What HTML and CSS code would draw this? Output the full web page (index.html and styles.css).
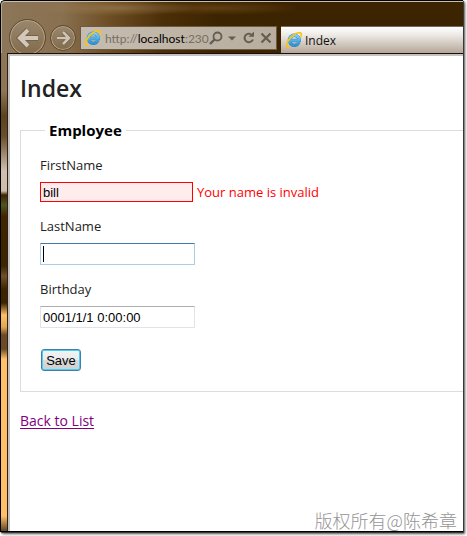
FILE: index.html
```html
<!DOCTYPE html>
<html lang="en">
<head>
<meta charset="utf-8">
<title>Index</title>
<link rel="stylesheet" href="styles.css">
</head>
<body>
<svg class="defs" aria-hidden="true">
  <defs>
    <linearGradient id="blue" x1="0" y1="0" x2="0" y2="1">
      <stop offset="0" stop-color="#7fd0f4"/>
      <stop offset="1" stop-color="#2f93d2"/>
    </linearGradient>
    <symbol id="ie" viewBox="0 0 16 16">
      <path d="M12.9 10.3A5 5 0 1 1 13.3 8.500H4" fill="none" stroke="#2f86c4" stroke-width="3.400"/>
      <path d="M12.9 10.3A5 5 0 1 1 13.3 8.500H4" fill="none" stroke="url(#blue)" stroke-width="2.600"/>
      <path d="M3.2 14.9C.2 15.8-.1 13 2 9.3 4.500 4.700 10.500.2 14 .8c1.700.3 1.700 2 .8 4" fill="none" stroke="#f9c414" stroke-width="1.700"/>
    </symbol>
  </defs>
</svg>
<div class="window">
  <header class="chrome">
    <nav class="nav">
      <button class="round back" aria-label="Back">
        <svg width="24" height="20" viewBox="0 0 24 20"><path d="M22 10H5M12 2L4 10l8 8" fill="none" stroke="#73614a" stroke-width="6"/><path d="M22 10H5M12 2L4 10l8 8" fill="none" stroke="#d2c7b8" stroke-width="4"/></svg>
      </button>
      <button class="round forward" aria-label="Forward">
        <svg width="15" height="14" viewBox="0 0 15 14"><path d="M1 7h11M7 1l6 6-6 6" fill="none" stroke="#6b5840" stroke-width="4"/><path d="M1 7h11M7 1l6 6-6 6" fill="none" stroke="#cfc3b3" stroke-width="2.600"/></svg>
      </button>
    </nav>
    <div class="address">
      <svg class="ie" width="16" height="16"><use href="#ie"/></svg>
      <span class="url"><span class="dim">http://</span>localhost<span class="dim">:230</span></span>
      <button class="tool" aria-label="Search"><svg width="14" height="14" viewBox="0 0 14 14"><circle cx="8.500" cy="5.500" r="4" fill="none" stroke="#665d52" stroke-width="1.800"/><path d="M5.500 8.500L1 13" stroke="#665d52" stroke-width="2.400"/></svg></button>
      <button class="tool" aria-label="Show addresses"><svg width="8" height="14" viewBox="0 0 8 14"><path d="M0 5.500h8L4 9.500z" fill="#665d52"/></svg></button>
      <button class="tool last" aria-label="Refresh"><svg width="12" height="14" viewBox="0 0 12 14"><path d="M8 3.200A4.300 4.300 0 1 0 9.900 8.500" fill="none" stroke="#665d52" stroke-width="2"/><path d="M5.500 5.800H11V.5z" fill="#665d52"/></svg></button>
      <button class="tool" aria-label="Stop"><svg width="12" height="14" viewBox="0 0 12 14"><path d="M1.500 2.500l9 9M10.500 2.500l-9 9" stroke="#665d52" stroke-width="2.200"/></svg></button>
    </div>
    <div class="tab">
      <svg class="ie" width="16" height="16"><use href="#ie"/></svg>
      <span>Index</span>
    </div>
  </header>
  <div class="frame">
    <main class="page">
      <h1>Index</h1>
      <form>
        <fieldset>
          <legend>Employee</legend>
          <label for="first">FirstName</label>
          <div class="field">
            <input class="invalid" id="first" type="text" value="bill" aria-describedby="first-error">
            <span class="error" id="first-error">Your name is invalid</span>
          </div>
          <label for="last">LastName</label>
          <div class="field focused"><input id="last" type="text"></div>
          <label for="birthday">Birthday</label>
          <div class="field"><input id="birthday" type="text" value="0001/1/1 0:00:00"></div>
          <button class="save" type="button">Save</button>
        </fieldset>
      </form>
      <p><a href="#">Back to List</a></p>
      <footer>版权所有@陈希章</footer>
    </main>
  </div>
</div>
</body>
</html>
```
FILE: styles.css
```css
* {
  box-sizing: border-box;
}

body {
  margin: 0;
  padding: 0 4px 4px 0;
  background: #fff;
  font-family: "Open Sans", sans-serif;
}

button {
  font: inherit;
  border: 0;
  padding: 0;
  background: none;
}

svg {
  display: block;
  flex: none;
}

.defs {
  position: absolute;
  width: 0;
  height: 0;
}

.window {
  display: flex;
  flex-direction: column;
  min-height: calc(100vh - 4px);
  border: 1px solid #000;
  border-right-width: 0;
  border-radius: 5px 0 0 0;
  overflow: hidden;
  background: linear-gradient(#8d7556 0, #8d7556 90px, #5d421e 115px, #6a4d2a 135px, #d0bfae 170px, #cdbca9 190px, #3d2400 194px, #4f5523 204px, #3f2600 215px, #3d2400 265px, #70502a 275px, #3d2400 288px, #3d2400 302px, #ffbf66 314px, #e2a650 326px, #6a4a28 334px, #6a4a28 348px, #ffc069 358px, #ffc069 515px, #5d4121 530px);
  box-shadow: 1px 1px 1px #333, 2px 2px 3px #555;
}

.chrome {
  display: flex;
  align-items: flex-end;
  height: 52px;
  border-top: 1px solid #c9bdab;
  border-left: 1px solid #b6a791;
  border-radius: 4px 0 0 0;
  overflow: hidden;
  background:
    radial-gradient(ellipse 80px 8px at 115px 6px, #a3835599, #a3835500),
    radial-gradient(ellipse 85px 7px at 215px 6px, #75501f99, #75501f00),
    linear-gradient(90deg, #8c7659 0, #89704f 60px, #6c4c23 110px, #4c2f08 160px, #3d2400 215px);
}

.nav {
  display: flex;
  align-items: center;
  gap: 4px;
  height: 37px;
  margin: 0 4px -3px 7px;
}

.round {
  display: flex;
  flex: none;
  align-items: center;
  justify-content: center;
  border: 1px solid #5b482f;
  border-radius: 50%;
  background: linear-gradient(#9a876c, #826b4c);
  box-shadow: inset 0 0 0 1px #b5a58e;
}

.back {
  width: 37px;
  height: 37px;
}

.forward {
  width: 26px;
  height: 26px;
}

.address {
  display: flex;
  flex: none;
  align-items: center;
  width: 197px;
  height: 24px;
  margin: 0 4px 3px 0;
  padding: 0 4px;
  border: 1px solid #6c5b44;
  background: linear-gradient(90deg, #c6bdb0, #b8ad9e);
  font-family: Lato, sans-serif;
  font-size: 12px;
  color: #000;
}

.url {
  flex: 1;
  min-width: 0;
  margin-left: 4px;
  white-space: nowrap;
}

.dim {
  color: #766f66;
}

.tool {
  flex: none;
  margin-left: 5px;
}

.last {
  margin-left: 7px;
}

.tab {
  display: flex;
  flex: 1;
  align-items: center;
  gap: 3px;
  height: 27px;
  padding-left: 5px;
  border-top: 1px solid #756a5b;
  background: linear-gradient(#fff 0, #eeeae6 30%, #b5a798);
  font-size: 12px;
  color: #111;
}

.frame {
  display: flex;
  flex: 1;
  margin-left: 6px;
  border-top: 1px solid #1c1006;
  border-left: 1px solid #2d2117;
}

.page {
  display: flex;
  flex: 1;
  flex-direction: column;
  min-width: 0;
  padding: 16px 0 0 10px;
  border-top: 2px solid #c4c2c0;
  border-left: 2px solid #c4c2c0;
  background: #fff;
  font-size: 13px;
  line-height: 20px;
  color: #222;
}

h1 {
  margin: 0 0 16px;
  font-size: 23px;
  font-weight: 600;
  line-height: 32px;
}

fieldset {
  min-width: 0;
  margin: 0;
  padding: 15px 0 20px 19px;
  border: 1px solid #dcdcdc;
  border-right: 0;
}

legend {
  margin-left: 5px;
  padding: 0 4px;
  font-size: 15px;
  font-weight: 700;
  color: #000;
}

label {
  display: block;
  margin-bottom: 7px;
}

.field {
  display: flex;
  align-items: center;
  gap: 4px;
  margin-bottom: 14px;
}

input {
  width: 155px;
  height: 22px;
  padding: 0 2px;
  border: 1px solid #e2e3ea;
  border-top-color: #abadb3;
  border-radius: 1px;
  outline: 0;
  background: #fff;
  font: 13px "Liberation Sans", sans-serif;
  color: #000;
}

.invalid {
  width: 153px;
  height: 20px;
  border: 1px solid #f00;
  border-radius: 0;
  background: #ffeded;
}

.error {
  color: #f00;
}

.focused {
  position: relative;
}

.focused input {
  border-color: #a9cfe6;
  border-top-color: #3d7bad;
}

.focused::after {
  content: "";
  position: absolute;
  left: 3px;
  top: 3px;
  width: 1px;
  height: 16px;
  background: #000;
}

.save {
  display: block;
  width: 40px;
  height: 22px;
  margin: 21px 0 0 1px;
  border: 1px solid #3c7fb1;
  border-radius: 3px;
  background: linear-gradient(#f2f2f2 0, #ebebeb 50%, #dadada 50%, #cfcfcf);
  box-shadow: inset 0 0 0 1px #49cdf3;
  font: 13px "Liberation Sans", sans-serif;
  color: #000;
}

p {
  margin: 19px 0;
  font-size: 14px;
}

a {
  color: #800080;
  text-underline-offset: 2px;
}

footer {
  margin-top: auto;
  padding-right: 6px;
  font-family: "Noto Sans CJK SC", sans-serif;
  font-size: 18px;
  font-weight: 300;
  line-height: 22px;
  text-align: right;
  color: #959595;
}
```
